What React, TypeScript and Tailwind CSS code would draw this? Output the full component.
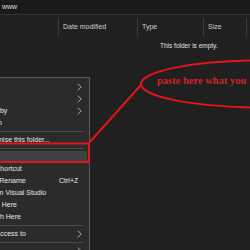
import React from 'react';

type Item =
  | { kind: 'sep' }
  | { kind: 'item'; label: string; off: string; sub?: boolean; shortcut?: string; active?: boolean };

// the menu is pushed off the left edge, so each label starts a little outside the window
const items: Item[] = [
  { kind: 'item', label: 'View', off: 'ml-[-24px]', sub: true },
  { kind: 'item', label: 'Sort by', off: 'ml-[-26px]', sub: true },
  { kind: 'item', label: 'Group by', off: 'ml-[-21.5px]', sub: true },
  { kind: 'item', label: 'Refresh', off: 'ml-[-22.5px]' },
  { kind: 'sep' },
  { kind: 'item', label: 'Customise this folder...', off: 'ml-[-21px]' },
  { kind: 'sep' },
  { kind: 'item', label: 'Paste', off: 'ml-[-24px]', active: true },
  { kind: 'item', label: 'Paste shortcut', off: 'ml-[-23px]' },
  { kind: 'item', label: 'Undo Rename', off: 'ml-[-19.5px]', shortcut: 'Ctrl+Z' },
  { kind: 'item', label: 'Open in Visual Studio', off: 'ml-[-21px]' },
  { kind: 'item', label: 'Git GUI Here', off: 'ml-[-23.5px]' },
  { kind: 'item', label: 'Git Bash Here', off: 'ml-[-23px]' },
  { kind: 'sep' },
  { kind: 'item', label: 'Give access to', off: 'ml-[-20px]', sub: true },
  { kind: 'sep' },
  { kind: 'item', label: 'New', off: 'ml-[-24px]', sub: true },
];

function Chevron() {
  return (
    <svg width="5" height="8" viewBox="0 0 5 8" className="absolute right-[7px] top-[2px]">
      <path d="M0.8 0.6 L4.2 4 L0.8 7.4" fill="none" stroke="#bdbdbd" strokeWidth="0.9" />
    </svg>
  );
}

function ContextMenu() {
  return (
    <div className="absolute left-0 top-[77px] w-[90px] h-[190px] overflow-hidden bg-[#2b2b2b] border border-l-0 border-[#5c5c5c] pt-[3px]">
      {items.map((it, i) =>
        it.kind === 'sep' ? (
          <div key={i} className="h-[5px] flex items-center">
            <div className="h-px w-[83px] bg-[#4a4a4a]" />
          </div>
        ) : (
          <div
            key={i}
            className={`relative h-[12px] flex items-center text-[7px] text-[#e6e6e6] whitespace-nowrap ${
              it.active ? 'bg-[#414141] mr-[2px]' : ''
            }`}
          >
            <span className={it.off}>{it.label}</span>
            {it.shortcut && <span className="absolute left-[59px]">{it.shortcut}</span>}
            {it.sub && <Chevron />}
          </div>
        )
      )}
    </div>
  );
}

export default function App() {
  return (
    <div
      className="relative w-[250px] h-[250px] overflow-hidden bg-[#202020] text-[#d6d6d6]"
      style={{ fontFamily: '"Liberation Sans", Arial, sans-serif' }}
    >
      {/* address bar */}
      <div className="h-[15px] bg-[#1a1a1a] border-b border-[#333333] flex items-center pl-[2px] text-[7px] text-[#dcdcdc]">
        www
      </div>

      {/* column headers */}
      <div className="flex h-[18px] mt-[3px] text-[7px] text-[#cfcfcf]">
        <div className="w-[58px]" />
        <div className="w-[79px] border-l border-[#3d3d3d] pl-[4px] flex items-center">Date modified</div>
        <div className="w-[66px] border-l border-[#3d3d3d] pl-[4px] flex items-center">Type</div>
        <div className="w-[43px] border-l border-[#3d3d3d] pl-[4px] flex items-center">Size</div>
        <div className="border-l border-[#3d3d3d]" />
      </div>

      <div className="pl-[160px] mt-[5px] text-[6.5px] text-[#e0e0e0]">This folder is empty.</div>

      <ContextMenu />

      {/* annotation */}
      <svg className="absolute inset-0 pointer-events-none" width="250" height="250" viewBox="0 0 250 250">
        <ellipse cx="263" cy="84" rx="122" ry="23.5" fill="none" stroke="#e3141c" strokeWidth="2" />
        <line x1="88" y1="144" x2="141" y2="85" stroke="#e3141c" strokeWidth="2" />
        <rect x="-4" y="143.5" width="93" height="18.5" fill="none" stroke="#e3141c" strokeWidth="2" />
      </svg>
      <div
        className="absolute left-[157px] top-[73px] text-[10.5px] font-bold text-[#d0222a] whitespace-nowrap"
        style={{ fontFamily: '"Liberation Serif", "Times New Roman", serif' }}
      >
        paste here what you
      </div>
    </div>
  );
}
